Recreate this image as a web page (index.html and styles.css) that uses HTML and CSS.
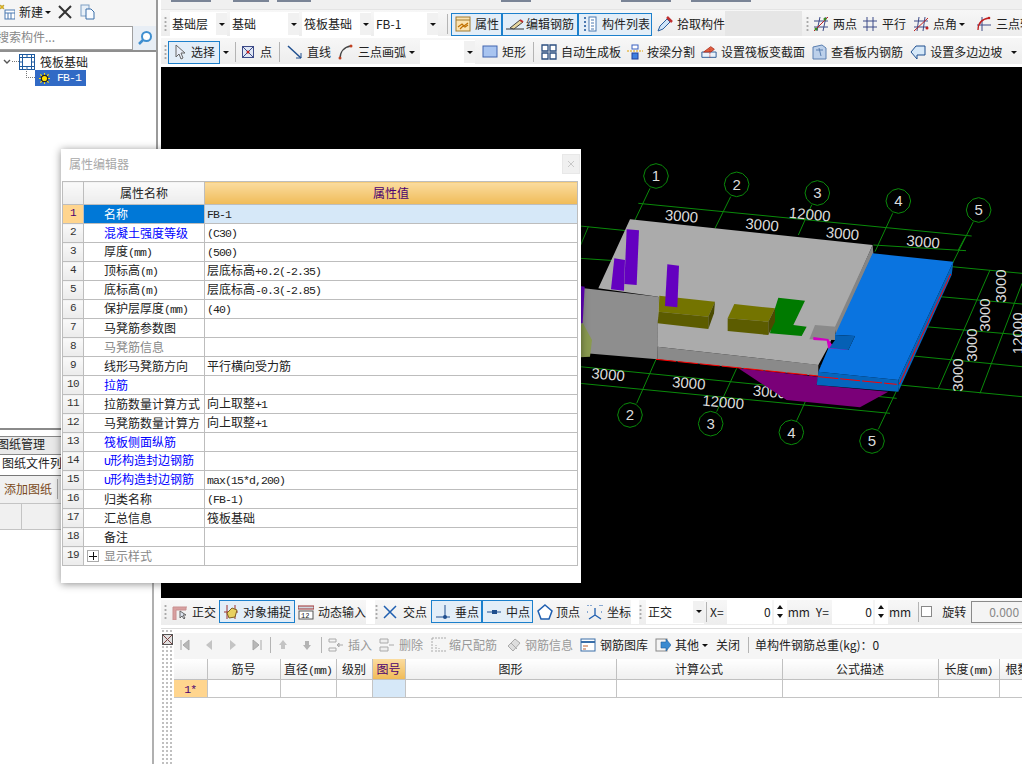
FILE: index.html
```html
<!DOCTYPE html>
<html lang="zh-CN">
<head>
<meta charset="utf-8">
<title>属性编辑器</title>
<link rel="stylesheet" href="styles.css">
</head>
<body>
<div class="app">
  <aside class="side">
    <div class="side-upper">
      <div class="side-tools">
        <svg class="ic new-ic" viewBox="0 0 16 16"><path d="M1 1l2 1 2-1-1 2 1 2-2-1-2 1 1-2z" fill="#f0c020" stroke="#a08000" stroke-width=".5"/><rect x="6" y="6" width="10" height="9" fill="#fff" stroke="#4a78b0"/><path d="M6 9h10M9 9v6M12 9v6" stroke="#4a78b0"/></svg>
        <span class="t-new">新建</span><span class="arrow"></span>
        <svg class="ic del-ic" viewBox="0 0 14 14"><path d="M1 1l12 12M13 1L1 13" stroke="#333" stroke-width="2"/></svg>
        <svg class="ic copy-ic" viewBox="0 0 16 16"><rect x="1" y="1" width="8" height="11" fill="#e8f0f8" stroke="#7f9fc4"/><path d="M6 5h5l3 3v7H6z" fill="#f8fbff" stroke="#3a6ea8"/></svg>
      </div>
      <div class="search">
        <div class="search-box">搜索构件...</div>
        <div class="search-btn"><svg class="ic" viewBox="0 0 16 16"><circle cx="9.500" cy="6.500" r="4.500" fill="#fff" stroke="#3f8fd0" stroke-width="2"/><path d="M6 10l-4 4" stroke="#3f8fd0" stroke-width="2.500"/></svg></div>
      </div>
      <div class="tree">
        <div class="tree-root">
          <svg class="chev" viewBox="0 0 8 6"><path d="M1 1l3 3 3-3" fill="none" stroke="#555" stroke-width="1.400"/></svg>
          <span class="dots-h"></span>
          <svg class="ic" viewBox="0 0 16 16"><rect x=".5" y=".5" width="15" height="15" fill="#fff" stroke="#1f5b9f"/><rect x="3.500" y="3.500" width="9" height="9" fill="#fff" stroke="#1f5b9f"/><path d="M0 3.500h16M0 12.500h16M3.500 0v16M12.500 0v16M8 0v3M8 13v3M0 8h3M13 8h3" stroke="#1f5b9f"/></svg>
          <span class="tree-label">筏板基础</span>
        </div>
        <div class="tree-child">
          <span class="dots-l"></span>
          <div class="tree-sel">
            <svg class="sun" viewBox="0 0 12 12"><circle cx="6" cy="6" r="3.500" fill="#ffe000" stroke="#222" stroke-width="1.400"/><path d="M6 0v2M6 10v2M0 6h2M10 6h2M1.500 1.500l1.500 1.500M9 9l1.500 1.500M10.500 1.500L9 3M3 9l-1.500 1.500" stroke="#ffe000" stroke-width="1.200"/></svg>
            <span class="mono sel-t">FB-1</span>
          </div>
        </div>
      </div>
    </div>
    <div class="side-lower">
      <div class="lower-title"><span class="clip-l">图纸管理</span></div>
      <div class="lower-sub">图纸文件列表</div>
      <div class="lower-btns"><span class="add-btn">添加图纸</span><span class="vsep-s"></span></div>
      <div class="lower-head"><span class="lh-a"></span><span class="lh-b"></span></div>
    </div>
  </aside>

  <main class="main">
    <div class="strip">
      <span class="frag f1"></span><span class="frag f2"></span><span class="frag f3"></span><span class="frag f4"></span><span class="frag f5"></span><span class="frag f6"></span>
    </div>
    <div class="bar bar1">
      <span class="grip g-a"></span>
      <div class="combo w57"><span class="cv">基础层</span><span class="cb"><i class="arrow"></i></span></div>
      <div class="combo w70"><span class="cv">基础</span><span class="cb"><i class="arrow"></i></span></div>
      <div class="combo w70"><span class="cv">筏板基础</span><span class="cb"><i class="arrow"></i></span></div>
      <div class="combo w64"><span class="cv">FB-1</span><span class="cb"><i class="arrow"></i></span></div>
      <span class="vsep s-a"></span>
      <div class="btn on b-attr"><svg class="ic" viewBox="0 0 16 16"><rect x="1" y="1" width="14" height="14" fill="#fbe3b0" stroke="#a07a30"/><path d="M1 4h14" stroke="#a07a30"/><path d="M3 11l4-3 2 2 4-3M5 13l3-3 2 1 3-2" fill="none" stroke="#c07000" stroke-width="1.200"/></svg>属性</div>
      <div class="btn on b-steel"><svg class="ic ic-w" viewBox="0 0 20 16"><path d="M1 13h18" stroke="#333"/><path d="M5 12l10-8 3 2-9 7z" fill="#e8d8a0" stroke="#444"/><path d="M15 4l3 2" stroke="#c03030" stroke-width="2"/></svg>编辑钢筋</div>
      <div class="btn on b-list"><svg class="ic" viewBox="0 0 16 16"><path d="M2 2h2M2 6h2M2 10h2M2 14h2" stroke="#4a78b0" stroke-width="2"/><rect x="7" y="1" width="7" height="14" fill="#fff" stroke="#4a78b0"/><path d="M9 4h3M9 7h3M9 10h3M9 13h3" stroke="#4a78b0"/></svg>构件列表</div>
      <div class="tool t-pick"><svg class="ic" viewBox="0 0 16 16"><path d="M1 15l2-5 7-7 3 3-7 7z" fill="#cfe4f8" stroke="#2a5f9f"/><path d="M10 1l5 5" stroke="#c03030" stroke-width="2.500"/></svg>拾取构件</div>
      <span class="gap-fill"></span>
      <span class="grip g-b"></span>
      <div class="tool t-2p"><svg class="ic" viewBox="0 0 16 16"><path d="M1 5h14M1 11h14M7 1L4 15M13 1l-3 14" stroke="#3c4a88"/><path d="M1 15L15 1" stroke="#c02020"/><circle cx="3" cy="13" r="1.500" fill="#3a8a20"/><circle cx="12" cy="3" r="1.500" fill="#3a8a20"/></svg>两点</div>
      <div class="tool t-par"><svg class="ic" viewBox="0 0 16 16"><path d="M1 5h14M1 11h14M5 1v14M11 1v14" stroke="#3c4a88"/></svg>平行</div>
      <div class="tool t-ang"><svg class="ic" viewBox="0 0 16 16"><path d="M1 5h14M1 11h14M6 1L4 15M12 1l-2 14" stroke="#3c4a88"/><path d="M1 15L15 2" stroke="#c02020"/><circle cx="14" cy="12" r="1.500" fill="#c02020"/></svg>点角</div>
      <span class="arrow a-ang"></span>
      <div class="tool t-3p"><svg class="ic" viewBox="0 0 16 16"><path d="M6 1v14M1 9h14" stroke="#3c4a88"/><path d="M2 14C2 7 6 3 13 2" fill="none" stroke="#c02020" stroke-width="1.300"/><circle cx="13" cy="2" r="1.300" fill="#c02020"/></svg>三点轴线</div>
    </div>
    <div class="bar bar2">
      <span class="grip g-a"></span>
      <div class="btn on b-sel"><svg class="ic" viewBox="0 0 16 16"><path d="M5 1v12l3-3 2 5 2-1-2-5h4z" fill="#e8eef8" stroke="#666"/></svg>选择</div>
      <span class="arrow a-sel"></span>
      <span class="vsep s-b"></span>
      <div class="tool t-pt"><svg class="ic ic-s" viewBox="0 0 12 12"><rect x=".5" y=".5" width="11" height="11" fill="#dfe6f4" stroke="#3c4a88"/><path d="M1 1l10 10M11 1L1 11" stroke="#3c4a88"/><circle cx="6" cy="6" r="1.500" fill="#c02020"/></svg>点</div>
      <span class="vsep s-c"></span>
      <div class="tool t-ln"><svg class="ic" viewBox="0 0 16 16"><path d="M1 2l13 12" stroke="#1f4f8f" stroke-width="1.500"/><path d="M14 9v5H9" fill="none" stroke="#1f4f8f"/></svg>直线</div>
      <div class="tool t-arc"><svg class="ic" viewBox="0 0 16 16"><path d="M2 15C2 8 6 3 13 2" fill="none" stroke="#444" stroke-width="1.400"/><circle cx="2" cy="14" r="1.500" fill="#c04020"/><circle cx="13" cy="2" r="1.500" fill="#c04020"/></svg>三点画弧</div>
      <span class="arrow a-arc"></span>
      <div class="combo w55 blank"><span class="cv"></span><span class="cb"><i class="arrow"></i></span></div>
      <div class="tool t-rect"><svg class="ic" viewBox="0 0 16 16"><rect x="1" y="2" width="14" height="11" fill="#a8c4f0" stroke="#4064b0"/></svg>矩形</div>
      <span class="vsep s-d"></span>
      <div class="tool t-auto"><svg class="ic" viewBox="0 0 16 16"><path d="M1 1h6v6H1zM9 1h6v6H9zM1 9h6v6H1zM9 9h6v6H9z" fill="#fff" stroke="#2c4f80" stroke-width="1.300"/></svg>自动生成板</div>
      <div class="tool t-cut"><svg class="ic" viewBox="0 0 16 16"><rect x="5" y="1" width="6" height="4" fill="#fff" stroke="#3a60c0"/><path d="M0 7h16" stroke="#e0a000" stroke-dasharray="2 1"/><rect x="5" y="9" width="6" height="6" fill="#4080e0" stroke="#2040a0"/></svg>按梁分割</div>
      <div class="tool t-var"><svg class="ic" viewBox="0 0 18 16"><path d="M1 14V8h16v6z" fill="#eaf2fb" stroke="#1f4f8f"/><path d="M3 8l8-6 4 3-4 3z" fill="#e06040" stroke="#b03020"/><path d="M10 5v9" stroke="#c02020" stroke-dasharray="1 1"/></svg>设置筏板变截面</div>
      <div class="tool t-see"><svg class="ic" viewBox="0 0 16 16"><path d="M2 3l9-2 4 3v11H2z" fill="#bcd0ea" stroke="#5a7fb0"/><path d="M5 6h7M8 4l2 8" stroke="#5a7fb0"/></svg>查看板内钢筋</div>
      <div class="tool t-slope"><svg class="ic" viewBox="0 0 16 16"><path d="M1 8l5-6h9v9H7v4z" fill="#d6e8f8" stroke="#1f4f8f"/></svg>设置多边边坡</div>
      <span class="arrow a-slope"></span>
    </div>

    <div class="canvas">
      <svg class="scene" viewBox="-1257 -249 2583 1593" preserveAspectRatio="none">
        <defs>
          <polygon id="axis" points="37,0 32,18 18,32 0,37 -18,32 -32,18 -37,0 -32,-18 -18,-32 0,-37 18,-32 32,-18" fill="none" stroke="#0a8a0a" stroke-width="3"/>
        </defs>
        <g stroke="#0a8a0a" stroke-width="3" fill="none">
          <path d="M210 115L165 210M452 140L405 235M695 165L655 255M938 190L885 305M1180 215L1115 345"/>
          <path d="M170 760L228 628M410 785L470 655M650 812L710 680M895 838L960 700"/>
          <path d="M175 160L1175 258M0 228L150 243M880 285L1158 302M0 325L105 332"/>
          <path d="M0 650L950 745M0 700L930 790"/>
          <path d="M1115 350L1326 370M1080 440L1326 462M1035 530L1326 555M1000 618L1326 650M960 705L1326 740"/>
          <path d="M1230 360L1075 715M1326 400L1200 730"/>
          <path d="M25 230L0 290"/>
          <path d="M1155 262L1135 300"/>
        </g>
        <use href="#axis" x="228" y="78"/><use href="#axis" x="470" y="103"/><use href="#axis" x="712" y="129"/><use href="#axis" x="955" y="153"/><use href="#axis" x="1196" y="180"/>
        <use href="#axis" x="150" y="795"/><use href="#axis" x="392" y="821"/><use href="#axis" x="634" y="847"/><use href="#axis" x="876" y="873"/>
        <g class="lbl">
          <text x="228" y="94">1</text><text x="470" y="119">2</text><text x="712" y="145">3</text><text x="955" y="169">4</text><text x="1196" y="196">5</text>
          <text x="150" y="811">2</text><text x="392" y="837">3</text><text x="634" y="863">4</text><text x="876" y="889">5</text>
        </g>
        <g class="dim">
          <text transform="translate(303 214) rotate(5)">3000</text>
          <text transform="translate(545 240) rotate(5)">3000</text>
          <text transform="translate(688 209) rotate(5)">12000</text>
          <text transform="translate(786 266) rotate(5)">3000</text>
          <text transform="translate(1028 291) rotate(5)">3000</text>
          <text transform="translate(83 689) rotate(5)">3000</text>
          <text transform="translate(325 715) rotate(5)">3000</text>
          <text transform="translate(567 741) rotate(5)">3000</text>
          <text transform="translate(428 772) rotate(5)">12000</text>
          <text transform="translate(1277 408) rotate(-90)">3000</text>
          <text transform="translate(1230 495) rotate(-90)">3000</text>
          <text transform="translate(1190 585) rotate(-90)">3000</text>
          <text transform="translate(1148 675) rotate(-90)">3000</text>
          <text transform="translate(1330 550) rotate(-90)">12000</text>
        </g>
        <polygon points="475,655 715,680 710,705 925,725 840,772 620,750" fill="#7a0078"/>
        <polygon points="12,415 235,440 232,628 0,608 0,420" fill="#8e8e8e"/>
        <polygon points="232,590 745,648 715,645 715,678 232,628" fill="#8a8a8a"/>
        <polygon points="150,208 878,285 770,530 745,590 715,645 232,590 235,440 55,415" fill="#ababab"/>
        <polygon points="878,285 880,310 768,555 765,530" fill="#858585"/>
        <polygon points="705,525 768,530 765,570 688,568" fill="#8a8a8a"/>
        <polygon points="700,561 745,567 760,590 805,596 800,604 745,597 740,572 700,570" fill="#d000c0"/>
        <polygon points="715,665 955,690 955,725 710,705" fill="#0565bd"/>
        <polygon points="1120,335 1115,375 955,725 955,690" fill="#0565bd"/>
        <polygon points="878,310 1120,335 955,690 715,665 745,595 805,600 825,558 765,555" fill="#0a74e0"/>
        <polygon points="765,555 825,558 805,600 748,594 765,570" fill="#0560b5"/>
        <path d="M228 628L715 678M715 680L950 703" stroke="#ff0000" stroke-width="3" stroke-dasharray="60 6" fill="none"/>
        <path d="M1112 372L958 702" stroke="#ff0000" stroke-width="3" fill="none"/>
        <polygon points="238,437 405,455 385,500 236,485" fill="#747400"/>
        <polygon points="236,485 385,500 385,537 233,520" fill="#5c5c00"/>
        <polygon points="405,455 402,490 385,537 385,500" fill="#4a4a00"/>
        <polygon points="595,443 675,452 640,525 680,530 665,558 570,550 585,475" fill="#007a00"/>
        <polygon points="463,462 585,475 565,515 443,505" fill="#747400"/>
        <polygon points="443,505 565,515 565,555 443,543" fill="#5c5c00"/>
        <polygon points="585,475 585,515 565,555 565,515" fill="#4a4a00"/>
        <polygon points="140,238 177,241 170,405 133,402" fill="#6400c0"/>
        <polygon points="103,325 135,330 132,422 93,418" fill="#6400c0"/>
        <polygon points="262,343 297,347 292,472 255,468" fill="#6400c0"/>
        <polygon points="0,408 14,410 8,520 0,520" fill="#6400c0"/>
        <polygon points="8,518 36,570 30,620 0,622 0,530" fill="#8a9a50"/>
      </svg>
    </div>

    <div class="bar bar3">
      <span class="grip g-a"></span>
      <div class="tool d-ortho"><svg class="ic" viewBox="0 0 16 16"><path d="M1 3h14M1 3v13h3V6h10V3" fill="#d8a0a0" stroke="#c89090"/><path d="M8 7v7l2-2 2 3 1-1-2-3h3z" fill="#dde4f0" stroke="#666"/></svg>正交</div>
      <div class="btn on d-snap"><svg class="ic" viewBox="0 0 16 16"><path d="M1 8h14M4 1v14M12 1v14" stroke="#9a3030"/><path d="M4 9l5-5 5 2-2 7-6 1z" fill="#e8d060" stroke="#806020"/></svg>对象捕捉</div>
      <div class="tool d-dyn"><svg class="ic" viewBox="0 0 16 16"><path d="M0 2h16v3H0z" fill="#d0d8e0" stroke="#a03030"/><rect x="1" y="7" width="14" height="8" fill="#fff" stroke="#555"/><text x="3" y="14" class="mini">12</text></svg>动态输入</div>
      <span class="gap-d"></span>
      <span class="grip g-c"></span>
      <div class="tool d-cross"><svg class="ic" viewBox="0 0 16 16"><path d="M2 2l12 12M14 2L2 14" stroke="#1f5fb0" stroke-width="1.500"/></svg>交点</div>
      <div class="btn on d-perp"><svg class="ic" viewBox="0 0 16 16"><path d="M1 13h14M10 1v12" stroke="#1f4f8f"/><circle cx="10" cy="13" r="2" fill="#1f4f8f"/></svg>垂点</div>
      <div class="btn on d-mid"><svg class="ic" viewBox="0 0 16 16"><path d="M1 8h14" stroke="#1f4f8f"/><rect x="6" y="6" width="5" height="4" fill="#1f4f8f"/></svg>中点</div>
      <div class="tool d-vert"><svg class="ic" viewBox="0 0 16 16"><path d="M8 1l7 6-3 8H4L1 7z" fill="#fff" stroke="#1f5fb0" stroke-width="1.500"/></svg>顶点</div>
      <div class="tool d-coord"><svg class="ic" viewBox="0 0 16 16"><path d="M8 4v7M8 11L2 15M8 11l6 4" stroke="#1f5fb0" stroke-width="1.300"/><path d="M1 1v2M4 1v2M13 1v2M15 1v2M0 8h2M14 8h2" stroke="#1f5fb0" stroke-dasharray="1 1"/></svg>坐标</div>
      <span class="gap-e"></span>
      <span class="grip g-d"></span>
      <div class="combo w58 c-ortho"><span class="cv">正交</span><span class="cb"><i class="arrow"></i></span></div>
      <span class="vsep s-e"></span>
      <span class="lab l-x">X=</span>
      <div class="spin sp-x"><span class="sv">0</span><span class="sb"><i class="up"></i><i class="down"></i></span></div>
      <span class="lab l-mm">mm</span>
      <span class="lab l-y">Y=</span>
      <div class="spin sp-y"><span class="sv">0</span><span class="sb"><i class="up"></i><i class="down"></i></span></div>
      <span class="lab l-mm">mm</span>
      <span class="vsep s-f"></span>
      <span class="check"></span>
      <span class="lab l-rot">旋转</span>
      <div class="rot">0.000</div>
    </div>

    <div class="panel">
      <div class="handle">
        <svg class="close-x" viewBox="0 0 11 11"><rect x=".5" y=".5" width="10" height="10" fill="#e0e0e0" stroke="#555"/><path d="M1 1l9 9M10 1l-9 9" stroke="#7a4040"/></svg>
      </div>
      <div class="panel-body">
        <div class="ptools">
          <svg class="nav n1" viewBox="0 0 10 12"><path d="M1 1v10M9 1v10L3 6z" fill="#b8b8b8" stroke="#a8a8a8"/></svg>
          <svg class="nav n2" viewBox="0 0 10 12"><path d="M8 1v10L2 6z" fill="#c4c4c4"/></svg>
          <svg class="nav n2" viewBox="0 0 10 12"><path d="M2 1v10l6-5z" fill="#c4c4c4"/></svg>
          <svg class="nav n2" viewBox="0 0 10 12"><path d="M9 1v10M1 1v10l6-5z" fill="#b8b8b8" stroke="#a8a8a8"/></svg>
          <span class="vsep s-g"></span>
          <svg class="nav n3" viewBox="0 0 10 12"><path d="M5 1l4 5H7v4H3V6H1z" fill="#c4c4c4"/></svg>
          <svg class="nav n4" viewBox="0 0 10 12"><path d="M5 11l4-5H7V2H3v4H1z" fill="#b4b4b4"/></svg>
          <span class="vsep s-h"></span>
          <div class="tool off p-ins"><svg class="ic" viewBox="0 0 16 16"><path d="M1 2h7v3H1zM1 11h7v3H1zM10 8h5M9 8l2-2v4z" fill="none" stroke="#aaa"/></svg>插入</div>
          <div class="tool off p-del"><svg class="ic" viewBox="0 0 16 16"><path d="M1 2h8v4H1zM1 10h8v4H1zM10 8h5" fill="#eee" stroke="#aaa"/></svg>删除</div>
          <div class="tool off p-sc"><svg class="ic" viewBox="0 0 16 16"><path d="M1 1h14M1 1v14M5 15V8M8 15v-4M11 15v-3M14 15v-2" fill="none" stroke="#aaa" stroke-dasharray="2 1"/></svg>缩尺配筋</div>
          <div class="tool off p-info"><svg class="ic" viewBox="0 0 16 16"><path d="M2 9l7-7 5 4-7 8z" fill="#ddd" stroke="#aaa"/><path d="M5 6l6 6" stroke="#aaa"/></svg>钢筋信息</div>
          <div class="tool p-lib"><svg class="ic" viewBox="0 0 16 16"><rect x="1" y="2" width="14" height="12" fill="#fff" stroke="#3a6ea8"/><path d="M1 5h14" stroke="#3a6ea8" stroke-width="2"/><path d="M3 9h5M3 12h3" stroke="#c06030"/></svg>钢筋图库</div>
          <div class="tool p-oth"><svg class="ic" viewBox="0 0 16 16"><rect x="1" y="2" width="11" height="12" fill="#f4f4f4" stroke="#888"/><path d="M6 5h5V2l5 6-5 6v-3H6z" fill="#3a8ad0" stroke="#1f5fa0" stroke-width=".6"/></svg>其他</div>
          <span class="arrow a-oth"></span>
          <div class="tool p-cls">关闭</div>
          <span class="vsep s-i"></span>
          <div class="tool p-tot">单构件钢筋总重(kg)：0</div>
        </div>
        <table class="steel">
          <colgroup>
            <col class="k0"><col class="k1"><col class="k2"><col class="k3"><col class="k4"><col class="k5"><col class="k6"><col class="k7"><col class="k8"><col class="k9">
          </colgroup>
          <thead>
            <tr><th></th><th>筋号</th><th>直径<span class="mono">(mm)</span></th><th>级别</th><th class="hot">图号</th><th>图形</th><th>计算公式</th><th>公式描述</th><th>长度<span class="mono">(mm)</span></th><th class="cut">根数</th></tr>
          </thead>
          <tbody>
            <tr><td class="rowno"><span class="mono">1*</span></td><td></td><td class="caret"></td><td></td><td class="soft"></td><td></td><td></td><td></td><td></td><td></td></tr>
          </tbody>
        </table>
      </div>
    </div>
  </main>
</div>

<section class="dialog">
  <header class="dlg-title"><span>属性编辑器</span><span class="dlg-x"><svg viewBox="0 0 8 8"><path d="M1 1l6 6M7 1L1 7" stroke="#c8c8c8"/></svg></span></header>
  <table class="props">
    <colgroup><col class="c0"><col class="c1"><col class="c2"></colgroup>
    <thead><tr><th></th><th>属性名称</th><th class="hot">属性值</th></tr></thead>
    <tbody>
      <tr class="sel"><td class="no">1</td><td class="nm">名称</td><td class="vl"><span class="mono">FB-1</span></td></tr>
      <tr><td class="no">2</td><td class="nm blue">混凝土强度等级</td><td class="vl"><span class="mono">(C30)</span></td></tr>
      <tr><td class="no">3</td><td class="nm">厚度<span class="mono">(mm)</span></td><td class="vl"><span class="mono">(500)</span></td></tr>
      <tr><td class="no">4</td><td class="nm">顶标高<span class="mono">(m)</span></td><td class="vl">层底标高<span class="mono">+0.2(-2.35)</span></td></tr>
      <tr><td class="no">5</td><td class="nm">底标高<span class="mono">(m)</span></td><td class="vl">层底标高<span class="mono">-0.3(-2.85)</span></td></tr>
      <tr><td class="no">6</td><td class="nm">保护层厚度<span class="mono">(mm)</span></td><td class="vl"><span class="mono">(40)</span></td></tr>
      <tr><td class="no">7</td><td class="nm">马凳筋参数图</td><td class="vl"></td></tr>
      <tr><td class="no">8</td><td class="nm gray">马凳筋信息</td><td class="vl"></td></tr>
      <tr><td class="no">9</td><td class="nm">线形马凳筋方向</td><td class="vl">平行横向受力筋</td></tr>
      <tr><td class="no">10</td><td class="nm blue">拉筋</td><td class="vl"></td></tr>
      <tr><td class="no">11</td><td class="nm">拉筋数量计算方式</td><td class="vl">向上取整<span class="mono">+1</span></td></tr>
      <tr><td class="no">12</td><td class="nm">马凳筋数量计算方</td><td class="vl">向上取整<span class="mono">+1</span></td></tr>
      <tr><td class="no">13</td><td class="nm blue">筏板侧面纵筋</td><td class="vl"></td></tr>
      <tr><td class="no">14</td><td class="nm blue"><span class="mono">U</span>形构造封边钢筋</td><td class="vl"></td></tr>
      <tr><td class="no">15</td><td class="nm blue"><span class="mono">U</span>形构造封边钢筋</td><td class="vl"><span class="mono">max(15*d,200)</span></td></tr>
      <tr><td class="no">16</td><td class="nm">归类名称</td><td class="vl"><span class="mono">(FB-1)</span></td></tr>
      <tr><td class="no">17</td><td class="nm">汇总信息</td><td class="vl">筏板基础</td></tr>
      <tr><td class="no">18</td><td class="nm">备注</td><td class="vl"></td></tr>
      <tr><td class="no">19</td><td class="nm gray has-plus"><span class="plus"></span>显示样式</td><td class="vl"></td></tr>
    </tbody>
  </table>
</section>
</body>
</html>
```
FILE: styles.css
```css
* { box-sizing: border-box; }
html, body { margin: 0; padding: 0; width: 1022px; height: 764px; overflow: hidden; }
body { font: 12px/16px "Noto Sans CJK SC", "Noto Sans", sans-serif; color: #222; background: #fff; position: relative; }
.mono { font-family: "Liberation Mono", monospace; font-size: 11.500px; letter-spacing: -.9px; line-height: 1; }
.app { display: grid; grid-template-columns: 161px 861px; height: 764px; }

/* side */
.side { display: flex; flex-direction: column; overflow: hidden; height: 764px; background: #fff; }
.side-upper { width: 158px; height: 430px; border-right: 2px solid #9a9a9a; border-bottom: 2px solid #8a8a8a; display: flex; flex-direction: column; flex: none; }
.side-tools { height: 26px; padding-bottom: 2px; background: #f5f5f5; display: flex; align-items: center; flex: none; }
.ic { width: 16px; height: 16px; flex: none; display: block; }
.new-ic { margin-left: -1px; }
.t-new { margin-left: 4px; }
.arrow { display: inline-block; width: 0; height: 0; border: 3px solid transparent; border-top: 3px solid #111; border-bottom: 0; flex: none; }
.side-tools .arrow { margin-left: 2px; }
.del-ic { width: 14px; height: 14px; margin-left: 7px; }
.copy-ic { margin-left: 8px; }
.search { height: 26px; display: flex; background: #f0f0f0; flex: none; border-bottom: 2px solid #8f8f8f; }
.search-box { width: 133px; height: 24px; background: #fff; border: 1px solid #a0a0a0; border-left: 0; color: #888; line-height: 20px; text-indent: -3px; white-space: nowrap; overflow: hidden; margin-top: 0; }
.search-btn { width: 23px; height: 24px; display: flex; align-items: center; justify-content: center; background: #e8eef5; }
.tree { flex: 1; background: #fff; padding-top: 1px; }
.tree-root { display: flex; align-items: center; height: 17px; }
.chev { width: 8px; height: 6px; margin-left: 3px; flex: none; }
.dots-h { width: 7px; border-top: 1px dotted #777; margin-left: 1px; }
.tree-label { margin-left: 5px; font-size: 12px; }
.tree-child { display: flex; height: 16px; padding-left: 26px; position: relative; }
.dots-l { width: 9px; height: 9px; border-left: 1px dotted #777; border-bottom: 1px dotted #777; margin-top: -1px; }
.tree-sel { width: 51px; height: 16px; background: #316ac5; display: flex; align-items: center; color: #fff; padding-left: 4px; }
.sun { width: 11px; height: 11px; flex: none; }
.sel-t { margin-left: 7px; color: #fff; }
.side-lower { width: 154px; flex: 1; border-right: 2px solid #b0b0b0; display: flex; flex-direction: column; padding-top: 6px; }
.lower-title { height: 19px; background: #e9e9e9; border-top: 1px solid #888; border-bottom: 1px solid #888; line-height: 14px; white-space: nowrap; overflow: hidden; font-size: 12px; }
.clip-l { margin-left: -3px; display: inline-block; }
.lower-sub { height: 21px; line-height: 15px; border-bottom: 1px solid #777; padding-left: 2px; white-space: nowrap; overflow: hidden; background: #fff; }
.lower-btns { height: 27px; background: #f0f0f0; display: flex; align-items: center; padding: 0 0 2px 4px; }
.add-btn { color: #7a4a20; }
.vsep-s { width: 1px; height: 20px; background: #aaa; margin-left: 5px; }
.lower-head { height: 27px; display: flex; border-top: 1px solid #c4c4c4; border-bottom: 1px solid #c4c4c4; background: #f0f0f0; }
.lh-a { width: 22px; border-right: 1px solid #c4c4c4; }

/* main */
.main { display: flex; flex-direction: column; height: 764px; background: #fff; min-width: 0; }
.strip { height: 10px; flex: none; background: #f0f0f0; display: flex; align-items: flex-start; border-bottom: 1px solid #e4e4e4; padding-left: 10px; overflow: hidden; }
.frag { height: 2px; background: #7a8496; flex: none; }
.f1 { width: 40px; } .f2 { width: 36px; margin-left: 22px; } .f3 { width: 34px; margin-left: 8px; } .f4 { width: 30px; margin-left: 190px; } .f5 { width: 50px; margin-left: 90px; } .f6 { width: 60px; margin-left: 20px; }
.bar { display: flex; align-items: center; flex: none; background: linear-gradient(#f7f7f7, #ededed); white-space: nowrap; overflow: hidden; }
.bar1 { height: 26px; margin-bottom: 2px; padding-top: 2px; }
.bar2 { height: 26px; margin-bottom: 3px; padding-top: 2px; }
.grip { width: 3px; height: 16px; flex: none; background: radial-gradient(circle, #aaa 1px, transparent 1.200px) 0 0 / 3px 4px; }
.g-a { margin-left: 3px; }
.combo { height: 24px; background: #fff; display: flex; flex: none; align-items: center; }
.cv { flex: 1; padding-left: 2px; }
.cb { width: 11px; height: 22px; display: flex; align-items: center; justify-content: center; background: #f1f1f1; flex: none; }
.w57 { width: 57px; } .w70 { width: 69px; } .w64 { width: 64px; } .w55 { width: 55px; } .w58 { width: 58px; }
.bar1 .combo { margin-left: 3px; }
.bar1 .combo:first-of-type { margin-left: 3px; }
.btn, .tool { display: flex; align-items: center; flex: none; height: 23px; gap: 4px; }
.btn { border: 1px solid #1c80cc; background: #e3eef8; padding: 0 3px; }
.vsep { width: 1px; height: 20px; background: #b4b4b4; flex: none; }
.s-a { margin: 0 3px 0 9px; }
.b-attr { width: 51px; }
.b-steel { width: 76px; gap: 1px; padding: 0 2px; }
.ic-w { width: 20px; }
.b-list { width: 74px; }
.t-pick { margin-left: 5px; }
.gap-fill { flex: none; width: 77px; height: 26px; background: #e6e6e6; }
.g-b { margin-left: 4px; }
.t-2p { margin-left: 4px; }
.t-par { margin-left: 5px; }
.t-ang { margin-left: 7px; }
.a-ang { margin-left: 2px; }
.t-3p { margin-left: 11px; }
.b-sel { margin-left: 1px; width: 52px; gap: 4px; padding-left: 2px; }
.a-sel { margin-left: 3px; }
.s-b { margin: 0 6px; }
.ic-s { width: 12px; height: 12px; }
.t-pt { gap: 6px; }
.s-c { margin: 0 7px; }
.t-arc { margin-left: 7px; }
.a-arc { margin-left: 3px; }
.blank { margin-left: 5px; }
.t-rect { margin-left: 7px; }
.s-d { margin: 0 7px; }
.t-cut, .t-var, .t-see { margin-left: 6px; }
.t-slope { margin-left: 7px; }
.a-slope { margin-left: 9px; }

/* canvas */
.canvas { height: 531px; background: #000; flex: none; overflow: hidden; }
.scene { display: block; width: 861px; height: 531px; }
.lbl text { font: 45px "Liberation Sans", sans-serif; fill: #dcdcdc; text-anchor: middle; }
.dim text { font: 45px "Liberation Sans", sans-serif; fill: #dcdcdc; text-anchor: middle; }
.mini { font: 7px "Liberation Mono", monospace; fill: #222; }

/* bottom toolbar */
.bar3 { height: 25px; margin-top: 2px; padding-bottom: 2px; }
.d-ortho { margin-left: 5px; }
.d-snap { margin-left: 3px; width: 76px; padding: 0 3px; }
.d-dyn { margin-left: 3px; }
.gap-d { width: 9px; height: 25px; background: #fff; flex: none; }
.g-c { margin-left: 0; }
.d-cross { margin-left: 4px; gap: 5px; }
.d-perp { margin-left: 4px; width: 51px; }
.d-mid { width: 51px; }
.d-vert { margin-left: 4px; gap: 3px; }
.d-coord { margin-left: 7px; }
.gap-e { width: 8px; height: 25px; background: #fff; flex: none; }
.g-d { margin-left: 0; }
.c-ortho { margin-left: 4px; }
.s-e { margin: 0 3px 0 2px; }
.lab { flex: none; }
.spin { display: flex; height: 24px; margin-left: 3px; flex: none; }
.sv { width: 45px; background: #fff; text-align: right; padding-right: 1px; line-height: 24px; font-size: 12px; }
.sp-y .sv { width: 41px; }
.sb { width: 13px; margin-left: 2px; display: flex; flex-direction: column; justify-content: center; gap: 5px; align-items: center; background: #fff; }
.up, .down { display: block; width: 0; height: 0; border: 3px solid transparent; }
.up { border-bottom: 4px solid #111; border-top: 0; }
.down { border-top: 4px solid #111; border-bottom: 0; }
.l-mm { margin-left: 1px; }
.l-y { margin-left: 6px; }
.s-f { margin: 0 2px 0 7px; }
.check { width: 11px; height: 11px; border: 1px solid #888; background: #fff; flex: none; }
.l-rot { margin-left: 10px; }
.rot { width: 60px; height: 22px; border: 1px solid #8a8a8a; background: #f4f4f4; color: #888; margin-left: 5px; padding-left: 17px; line-height: 20px; flex: none; font-size: 12px; }

/* panel */
.panel { flex: 1; display: flex; margin-top: 3px; background: #fff; min-height: 0; border-top: 1px solid #dcdcdc; }
.handle { width: 13px; flex: none; padding: 5px 1px 0; background: radial-gradient(circle, #c0c0c0 .8px, transparent 1px) 0 0 / 4px 4px; }
.close-x { width: 11px; height: 11px; display: block; }
.panel-body { flex: 1; min-width: 0; }
.ptools { height: 26px; margin-top: 4px; padding-bottom: 2px; display: flex; align-items: center; background: #f5f5f5; white-space: nowrap; overflow: hidden; }
.nav { width: 10px; height: 12px; flex: none; }
.n1 { margin-left: 6px; }
.n2 { margin-left: 14px; }
.s-g { margin: 0 7px 0 8px; height: 16px; }
.n3 { margin-left: 0; }
.n4 { margin-left: 14px; }
.s-h { margin: 0 6px 0 9px; height: 16px; }
.off { color: #999; }
.p-del { margin-left: 7px; }
.p-sc { margin-left: 8px; gap: 2px; }
.p-info { margin-left: 9px; gap: 3px; }
.p-lib { margin-left: 7px; }
.p-oth { margin-left: 7px; }
.a-oth { margin-left: 3px; }
.p-cls { margin-left: 8px; }
.s-i { margin: 0 6px 0 8px; height: 16px; }
.steel, .props { border-collapse: collapse; table-layout: fixed; }
.steel { width: 848px; }
.k0 { width: 33px; } .k1 { width: 73px; } .k2 { width: 56px; } .k3 { width: 36px; } .k4 { width: 33px; } .k5 { width: 211px; } .k6 { width: 166px; } .k7 { width: 156px; } .k8 { width: 61px; } .k9 { width: 41px; }
.steel th { height: 20px; font-weight: 400; padding: 0; text-align: center; background: linear-gradient(#fff, #efefef); border: 1px solid #c0c0c0; border-top: 0; white-space: nowrap; overflow: hidden; line-height: 16px; }
.steel th.cut { text-align: left; padding-left: 6px; border-right: 0; }
.steel td { height: 18px; padding: 0; border: 1px solid #c4c4c4; line-height: 16px; }
.steel th:first-child, .steel td:first-child { border-left: 0; }
.steel td:last-child { border-right: 0; }
.hot { background: linear-gradient(#fbdc9f, #f0bb58) !important; color: #4a0070; }
.rowno { background: #ffd58e; text-align: center; color: #4a0070; }
.caret { border-left: 1px solid #000 !important; }
.soft { background: #d6e8f8; }

/* dialog */
.dialog { position: absolute; left: 61px; top: 149px; width: 520px; height: 434px; background: #fff; box-shadow: 0 1px 8px rgba(0,0,0,.45); padding: 0 1px; }
.dlg-title { height: 32px; display: flex; justify-content: space-between; align-items: center; color: #a8a8a8; padding: 0 0 2px 7px; }
.dlg-x { width: 18px; height: 20px; background: #f0f0f0; border: 1px solid #e8e8e8; display: flex; align-items: center; justify-content: center; }
.dlg-x svg { width: 8px; height: 8px; }
.props { width: 516px; }
.c0 { width: 21px; } .c1 { width: 121px; }
.props th { height: 23px; font-weight: 400; padding: 0; text-align: center; background: linear-gradient(#fafafa, #ececec); border: 1px solid #bdbdbd; line-height: 16px; }
.props td { height: 19px; max-height: 19px; padding: 0 0 2px; border: 1px solid #bdbdbd; line-height: 15px; white-space: nowrap; overflow: hidden; }
.no { text-align: center; background: linear-gradient(#f9f9f9, #ebebeb); font-family: "Liberation Mono", monospace; font-size: 11px; letter-spacing: -.6px; color: #333; }
.nm { padding-left: 20px !important; }
.vl { padding-left: 2px !important; }
.blue { color: #0000ff; }
.gray { color: #888; }
.has-plus { position: relative; }
.plus { position: absolute; left: 3px; top: 3px; width: 12px; height: 12px; border: 1px solid #aaa; background: linear-gradient(90deg, transparent 4.500px, #111 4.500px, #111 5.500px, transparent 5.500px) center/100% 8px no-repeat, linear-gradient(transparent 4.500px, #111 4.500px, #111 5.500px, transparent 5.500px) center/8px 100% no-repeat, #fff; }
.sel .no { background: #ffd58e; color: #4a0070; }
.sel .nm { background: #0078d7; color: #fff; }
.sel .vl { background: #d6e8f8; }
```
